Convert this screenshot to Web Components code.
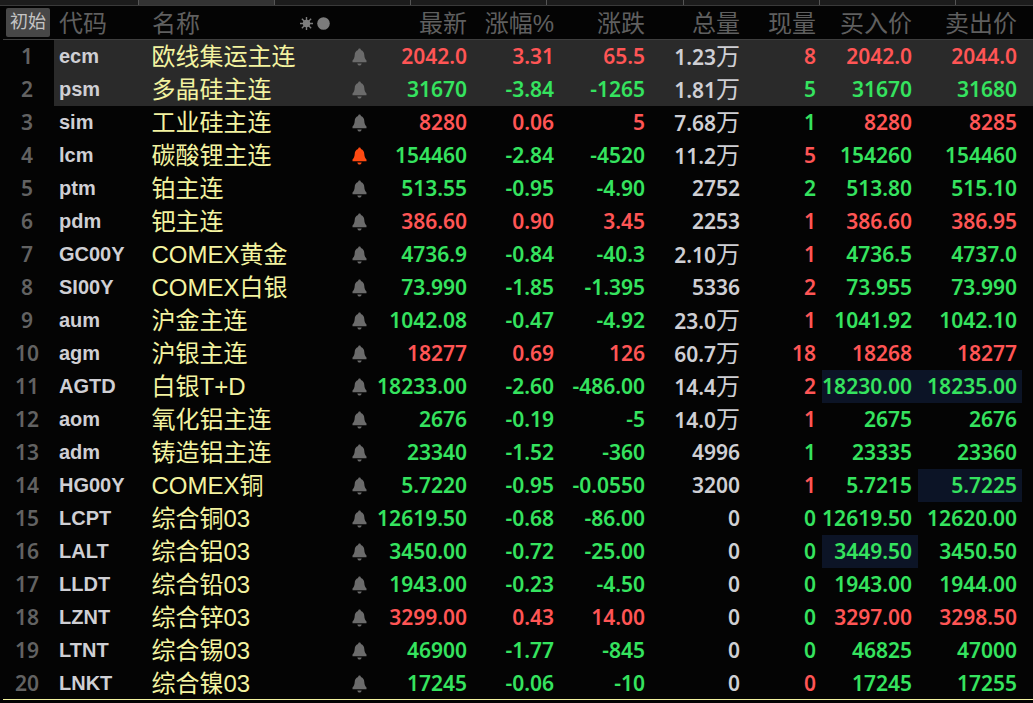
<!DOCTYPE html>
<html>
<head>
<meta charset="utf-8">
<style>
  html, body { margin: 0; background: #040404; height: 100%; overflow: hidden; }
</style>
</head>
<body>
<quote-board></quote-board>
<script>
const FONT = `"Liberation Sans", "Noto Sans CJK SC", sans-serif`;
const NUM_FONT = `"Noto Sans", "Noto Sans CJK SC", sans-serif`;
const RED = "#ff5555", GREEN = "#35e35f", GREY = "#cfcfd4";
const COLS = "92px 87px 91px 95px 76px 6px 96px 104px";

// code, name, last, pct, chg, vol, unit, cur, bid, ask
const rows = [
  ["ecm","欧线集运主连","2042.0","3.31","65.5","1.23","万",8,"2042.0","2044.0"],
  ["psm","多晶硅主连","31670","-3.84","-1265","1.81","万",5,"31670","31680"],
  ["sim","工业硅主连","8280","0.06","5","7.68","万",1,"8280","8285"],
  ["lcm","碳酸锂主连","154460","-2.84","-4520","11.2","万",5,"154260","154460"],
  ["ptm","铂主连","513.55","-0.95","-4.90","2752","",2,"513.80","515.10"],
  ["pdm","钯主连","386.60","0.90","3.45","2253","",1,"386.60","386.95"],
  ["GC00Y","COMEX黄金","4736.9","-0.84","-40.3","2.10","万",1,"4736.5","4737.0"],
  ["SI00Y","COMEX白银","73.990","-1.85","-1.395","5336","",2,"73.955","73.990"],
  ["aum","沪金主连","1042.08","-0.47","-4.92","23.0","万",1,"1041.92","1042.10"],
  ["agm","沪银主连","18277","0.69","126","60.7","万",18,"18268","18277"],
  ["AGTD","白银T+D","18233.00","-2.60","-486.00","14.4","万",2,"18230.00","18235.00"],
  ["aom","氧化铝主连","2676","-0.19","-5","14.0","万",1,"2675","2676"],
  ["adm","铸造铝主连","23340","-1.52","-360","4996","",1,"23335","23360"],
  ["HG00Y","COMEX铜","5.7220","-0.95","-0.0550","3200","",1,"5.7215","5.7225"],
  ["LCPT","综合铜03","12619.50","-0.68","-86.00","0","",0,"12619.50","12620.00"],
  ["LALT","综合铝03","3450.00","-0.72","-25.00","0","",0,"3449.50","3450.50"],
  ["LLDT","综合铅03","1943.00","-0.23","-4.50","0","",0,"1943.00","1944.00"],
  ["LZNT","综合锌03","3299.00","0.43","14.00","0","",0,"3297.00","3298.50"],
  ["LTNT","综合锡03","46900","-1.77","-845","0","",0,"46825","47000"],
  ["LNKT","综合镍03","17245","-0.06","-10","0","",0,"17245","17255"],
];
// 现量 colour is the trade side, not the price direction
const curRed = new Set([0,3,5,6,7,8,9,10,11,13,19]);
const bidHi = new Set([10,15]);
const askHi = new Set([10,13]);

class BoardCell extends HTMLElement {
  constructor() {
    super();
    this.attachShadow({ mode: "open" });
    this.shadowRoot.innerHTML = `<style>
      :host { display: block; text-align: right; white-space: nowrap; height: 33px; line-height: 33px; color: inherit; }
    </style><slot></slot>`;
  }
}
customElements.define("board-cell", BoardCell);

class BellIcon extends HTMLElement {
  constructor() {
    super();
    this.attachShadow({ mode: "open" });
    this.shadowRoot.innerHTML = `<style>
      :host { display: flex; align-items: center; height: 33px; }
      svg { display: block; width: 15px; height: 18px; margin-left: 7px; }
    </style>
    <svg viewBox="0 0 15 18"><path fill="currentColor" d="M7.500 0.500c.9 0 1.400.7 1.400 1.500 2.300.7 3.300 2.700 3.400 5 .1 2.800.9 4.200 2.200 5.500v1.700H.5v-1.700c1.300-1.300 2.100-2.700 2.200-5.500.1-2.300 1.100-4.300 3.400-5 0-.8.500-1.500 1.400-1.500zM5.300 15.400h4.400c-.2 1.200-1.100 2.100-2.200 2.100s-2-.9-2.200-2.100z"/></svg>`;
  }
}
customElements.define("bell-icon", BellIcon);

class QuoteRow extends HTMLElement {
  constructor() {
    super();
    this.attachShadow({ mode: "open" });
  }
  set data(d) {
    const [r, i] = d;
    const dirColor = r[3].startsWith("-") ? GREEN : RED;
    const curColor = curRed.has(i) ? RED : GREEN;
    const bell = i === 3 ? "#ff4a12" : "#6b6b6b";
    const unit = r[6] ? `<span class="unit">${r[6]}</span>` : "";
    this.shadowRoot.innerHTML = `<style>
      :host { display: grid; height: 33px; background: ${i < 2 ? "#2a2a2a" : "transparent"};
        grid-template-columns: 54px 98px 193px 30px 1fr; font-family: ${FONT}; }
      .no { background: #040404; color: #626262; font-family: ${NUM_FONT}; font-weight: 600; font-size: 21px; text-align: center; line-height: 33px; }
      .code { color: ${GREY}; font-weight: 700; font-size: 20px; line-height: 32px; padding-left: 5px; }
      .name { color: #f3f3a0; font-size: 24px; line-height: 34px; white-space: nowrap; margin-left: -0.500px; }
      .nums { display: grid; grid-template-columns: ${COLS}; font-family: ${NUM_FONT}; font-weight: 600; font-size: 21px; }
      .vol { color: ${GREY}; }
      .unit { font-family: ${FONT}; font-weight: 400; font-size: 24px; }
      .cur { color: ${curColor}; grid-column: 5; }
      .bid { color: ${dirColor}; grid-column: 7; padding-right: 6px; }
      .ask { color: ${dirColor}; padding-right: 5px; }
      .hi { background: #0c1426; }
      .c { color: ${dirColor}; }
    </style>
    <div class="no">${i + 1}</div>
    <div class="code">${r[0]}</div>
    <div class="name">${r[1]}</div>
    <bell-icon style="color:${bell}"></bell-icon>
    <div class="nums">
      <board-cell class="c">${r[2]}</board-cell>
      <board-cell class="c">${r[3]}</board-cell>
      <board-cell class="c">${r[4]}</board-cell>
      <board-cell class="vol">${r[5]}${unit}</board-cell>
      <board-cell class="cur">${r[7]}</board-cell>
      <board-cell class="bid ${bidHi.has(i) ? "hi" : ""}">${r[8]}</board-cell>
      <board-cell class="ask ${askHi.has(i) ? "hi" : ""}">${r[9]}</board-cell>
    </div>`;
  }
}
customElements.define("quote-row", QuoteRow);

class QuoteBoard extends HTMLElement {
  constructor() {
    super();
    this.attachShadow({ mode: "open" });
    this.shadowRoot.innerHTML = `<style>
      :host { display: block; width: 1033px; height: 703px; background: #040404; font-family: ${FONT}; overflow: hidden; }
      .strip { height: 5px; background: #1c1c1c; border-bottom: 1px solid #3a3a3a; display: flex; }
      .strip i { display: block; box-sizing: border-box; flex: 0 0 136.300px; border-right: 1px solid #555; }
      .strip i:first-child { flex-basis: 138.500px; }
      .strip i.on { background: #333; }
      .head { display: grid; height: 33px; border-bottom: 1px solid #3f3f3f; margin-left: 3px;
        grid-template-columns: 56px 93px 147px 76px 1fr; align-items: center; color: #5f5f5f; font-size: 24px; line-height: 28px; }
      .t { padding-top: 3px; }
      .btn { width: 44px; height: 29px; margin-left: 3px; background: #474747; border-radius: 2px; color: #c4c4c4; font-size: 18px;
        text-align: center; line-height: 29px; }
      .dots { display: flex; align-items: center; gap: 4px; margin: 2px 0 0 1px; }
      .dots svg { display: block; }
      .labels { display: grid; grid-template-columns: ${COLS}; padding-top: 3px; }
      .labels span { text-align: right; white-space: nowrap; }
      .labels .bid { grid-column: 7; padding-right: 6px; }
      .labels .ask { padding-right: 5px; }
      .list { display: block; }
      .foot { height: 1px; background: #f3f3a0; margin: -1px 0 0 3px; position: relative; }
    </style>
    <div class="strip"><i></i><i class="on"></i><i></i><i></i><i></i><i></i><i></i><i></i></div>
    <div class="head">
      <div class="btn">初始</div>
      <div class="t">代码</div>
      <div class="t">名称</div>
      <div class="dots">
        <svg width="13" height="13" viewBox="0 0 14 14"><g stroke="#7c7c7c" stroke-width="1.500"><path d="M7 0v14M0 7h14M2 2l10 10M12 2L2 12"/></g><circle cx="7" cy="7" r="4" fill="#7c7c7c"/></svg>
        <svg width="13" height="13" viewBox="0 0 13 13"><circle cx="6.500" cy="6.500" r="6.300" fill="#7c7c7c"/></svg>
      </div>
      <div class="labels"><span>最新</span><span>涨幅%</span><span>涨跌</span><span>总量</span><span>现量</span><span class="bid">买入价</span><span class="ask">卖出价</span></div>
    </div>
    <div class="list"></div>
    <div class="foot"></div>`;
    const list = this.shadowRoot.querySelector(".list");
    rows.forEach((r, i) => {
      const row = document.createElement("quote-row");
      row.data = [r, i];
      list.appendChild(row);
    });
  }
}
customElements.define("quote-board", QuoteBoard);
</script>
</body>
</html>
